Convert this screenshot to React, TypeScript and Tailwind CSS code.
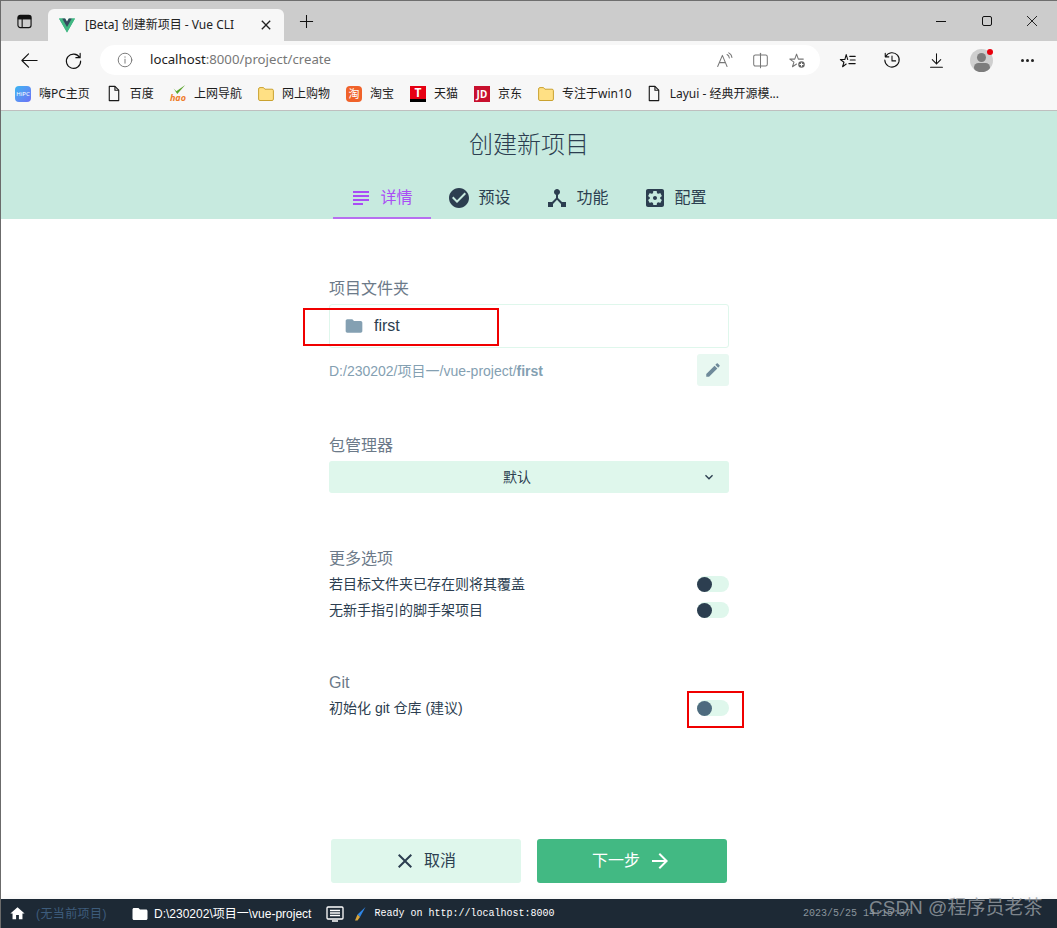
import type { ReactNode } from 'react';

const SANS = "font-['Liberation_Sans','Noto_Sans_CJK_SC',sans-serif]";
const UI = "font-['Noto_Sans','Noto_Sans_CJK_SC',sans-serif]";

function Md({ d, className }: { d: string; className?: string }) {
  return (
    <svg viewBox="0 0 24 24" className={className} fill="currentColor">
      <path d={d} />
    </svg>
  );
}

function Line({ children, className }: { children: ReactNode; className?: string }) {
  return (
    <svg
      viewBox="0 0 20 20"
      className={className}
      fill="none"
      stroke="currentColor"
      strokeWidth="1.2"
      strokeLinecap="round"
      strokeLinejoin="round"
    >
      {children}
    </svg>
  );
}

const paths = {
  subject: 'M14 17H4v2h10v-2zm6-8H4v2h16V9zM4 15h16v-2H4v2zM4 5v2h16V5H4z',
  check:
    'M12 2C6.48 2 2 6.48 2 12s4.48 10 10 10 10-4.48 10-10S17.52 2 12 2zm-2 15l-5-5 1.41-1.41L10 14.17l7.59-7.59L19 8l-9 9z',
  hub: 'M17 16l-4-4V8.82C14.16 8.4 15 7.3 15 6c0-1.66-1.34-3-3-3S9 4.34 9 6c0 1.3.84 2.4 2 2.82V12l-4 4H3v5h5v-3.05l4-4.2 4 4.2V21h5v-5h-4z',
  settings:
    'M12 10c-1.1 0-2 .9-2 2s.9 2 2 2 2-.9 2-2-.9-2-2-2zm7-7H5c-1.11 0-2 .9-2 2v14c0 1.1.89 2 2 2h14c1.11 0 2-.9 2-2V5c0-1.1-.89-2-2-2zm-1.75 9c0 .23-.02.46-.05.68l1.48 1.16c.13.11.17.3.08.45l-1.4 2.42c-.09.15-.27.21-.43.15l-1.74-.7c-.36.28-.76.51-1.18.69l-.26 1.85c-.03.17-.18.3-.35.3h-2.8c-.17 0-.32-.13-.35-.29l-.26-1.85c-.43-.18-.82-.41-1.18-.69l-1.74.7c-.16.06-.34 0-.43-.15l-1.4-2.42c-.09-.15-.05-.34.08-.45l1.48-1.16c-.03-.23-.05-.46-.05-.69 0-.23.02-.46.05-.68l-1.48-1.16c-.13-.11-.17-.3-.08-.45l1.4-2.42c.09-.15.27-.21.43-.15l1.74.7c.36-.28.76-.51 1.18-.69l.26-1.85c.03-.17.18-.3.35-.3h2.8c.17 0 .32.13.35.29l.26 1.85c.43.18.82.41 1.18.69l1.74-.7c.16-.06.34 0 .43.15l1.4 2.42c.09.15.05.34-.08.45l-1.48 1.16c.03.23.05.46.05.69z',
  folder: 'M10 4H4c-1.1 0-1.99.9-1.99 2L2 18c0 1.1.9 2 2 2h16c1.1 0 2-.9 2-2V8c0-1.1-.9-2-2-2h-8l-2-2z',
  edit: 'M3 17.25V21h3.75L17.81 9.94l-3.75-3.75L3 17.25zM20.71 7.04c.39-.39.39-1.02 0-1.41l-2.34-2.34c-.39-.39-1.02-.39-1.41 0l-1.83 1.83 3.75 3.75 1.83-1.83z',
  expand: 'M16.59 8.59L12 13.17 7.41 8.59 6 10l6 6 6-6z',
  close:
    'M19 6.41L17.59 5 12 10.59 6.41 5 5 6.41 10.59 12 5 17.59 6.41 19 12 13.41 17.59 19 19 17.59 13.41 12z',
  arrow: 'M12 4l-1.41 1.41L16.17 11H4v2h12.17l-5.58 5.59L12 20l8-8z',
  home: 'M10 20v-6h4v6h5v-8h3L12 3 2 12h3v8z',
};

function DocIcon() {
  return (
    <svg viewBox="0 0 16 18" className="w-[16px] h-[17px]" fill="none" stroke="#1a1a1a" strokeWidth="1.2">
      <path d="M3 1.5h6l4 4v11H3z" strokeLinejoin="round" />
      <path d="M9 1.5v4h4" />
    </svg>
  );
}

function FolderIcon() {
  return (
    <svg viewBox="0 0 16 14" className="w-[16px] h-[14px]">
      <path d="M.6 2c0-.8.5-1.4 1.3-1.4h3.6l1.4 1.6h7.2c.8 0 1.3.6 1.3 1.4v8.6c0 .8-.5 1.3-1.3 1.3H1.9c-.8 0-1.3-.5-1.3-1.3z" fill="#ffe084" stroke="#c49a20" strokeWidth="0.9" />
    </svg>
  );
}

function Bookmark({ icon, label, className }: { icon: ReactNode; label: string; className?: string }) {
  return (
    <div className={`flex items-center gap-[8px] ${className ?? ''}`}>
      <span className="flex w-[16px] justify-center">{icon}</span>
      <span className="text-[12px] text-[#1c1c1c] whitespace-nowrap">{label}</span>
    </div>
  );
}

function Tab({ icon, label, active }: { icon: string; label: string; active?: boolean }) {
  return (
    <div
      className={`w-[98px] h-[42px] flex items-center justify-center gap-[7px] border-b-2 pt-[2px] pr-[2px] ${
        active ? 'border-[#b76ef0] text-[#a94df5]' : 'border-transparent text-[#2c3e50]'
      }`}
    >
      <Md d={icon} className="w-[24px] h-[24px]" />
      <span className="text-[16px]">{label}</span>
    </div>
  );
}

function SectionLabel({ children }: { children: ReactNode }) {
  return <div className="text-[16px] leading-[20px] text-[#6c7a89]">{children}</div>;
}

function Toggle({ faded }: { faded?: boolean }) {
  return (
    <div className="w-[32px] h-[16px] rounded-full bg-[#dff7ec] flex items-center">
      <div className={`w-[15px] h-[15px] rounded-full ${faded ? 'bg-[#4e6b7f]' : 'bg-[#2c3e50]'}`} />
    </div>
  );
}

function OptionRow({ label, faded }: { label: string; faded?: boolean }) {
  return (
    <div className="flex items-center justify-between h-[26px]">
      <span className="text-[14px] text-[#2c3e50]">{label}</span>
      <Toggle faded={faded} />
    </div>
  );
}

export default function App() {
  return (
    <div className={`relative w-[1057px] h-[928px] overflow-hidden flex flex-col bg-white border-l border-[#6b6b6b] ${UI}`}>
      {/* tab strip */}
      <div className="h-[41px] shrink-0 bg-[#cccccc] border-t border-[#6e6e6e] flex items-end">
        <div className="w-[47px] h-[40px] flex items-center justify-center">
          <svg viewBox="0 0 16 16" className="w-[15px] h-[15px]" fill="none" stroke="#111" strokeWidth="1.2">
            <rect x="1" y="1.5" width="14" height="13" rx="2.5" />
            <path d="M1 5h14M5.5 5v9.5" />
            <path d="M1.5 2.5h13V5h-13z" fill="#111" />
          </svg>
        </div>
        <div className="w-[236px] h-[32px] bg-[#f7f7f7] rounded-t-[6px] flex items-center pl-[11px] pr-[10px]">
          <svg viewBox="0 0 256 221" className="w-[16px] h-[15px] shrink-0">
            <path d="M204.8 0H256L128 220.8 0 0h97.92L128 51.2 157.44 0z" fill="#41b883" />
            <path d="M0 0l128 220.8L256 0h-51.2L128 132.48 50.56 0z" fill="#41b883" />
            <path d="M50.56 0L128 133.12 204.8 0h-47.36L128 51.2 97.92 0z" fill="#35495e" />
          </svg>
          <span className="ml-[10px] text-[12px] text-[#222] whitespace-nowrap">[Beta] 创建新项目 - Vue CLI</span>
          <Md d={paths.close} className="ml-auto w-[16px] h-[16px] text-[#222]" />
        </div>
        <div className="w-[44px] h-[40px] flex items-center justify-center">
          <svg viewBox="0 0 16 16" className="w-[15px] h-[15px]" stroke="#111" strokeWidth="1.1">
            <path d="M8 1v14M1 8h14" />
          </svg>
        </div>
        <div className="ml-auto mr-[2px] h-[40px] flex items-center text-[#111]">
          <div className="w-[46px] flex justify-center">
            <svg viewBox="0 0 10 10" className="w-[10px] h-[10px]" stroke="currentColor"><path d="M0 5.5h10" /></svg>
          </div>
          <div className="w-[45px] flex justify-center">
            <svg viewBox="0 0 10 10" className="w-[10px] h-[10px]" fill="none" stroke="currentColor"><rect x="0.5" y="0.5" width="9" height="9" rx="1.5" /></svg>
          </div>
          <div className="w-[46px] flex justify-center">
            <svg viewBox="0 0 10 10" className="w-[10px] h-[10px]" stroke="currentColor" strokeWidth="0.9"><path d="M0 0l10 10M10 0L0 10" /></svg>
          </div>
        </div>
      </div>

      {/* toolbar */}
      <div className="h-[36px] shrink-0 bg-[#f7f7f7] flex items-center pt-[2px]">
        <div className="w-[55px] flex justify-center pl-[2px]">
          <Line className="w-[19px] h-[19px] text-[#111]">
            <path d="M18 10H2M9 3l-7 7 7 7" />
          </Line>
        </div>
        <div className="w-[35px] flex justify-center">
          <Line className="w-[19px] h-[19px] text-[#111]">
            <path d="M16.5 7A7.5 7.5 0 1 0 17.5 10.5M17 2.5V7h-4.5" />
          </Line>
        </div>
        <div className="ml-[9px] w-[720px] h-[30px] rounded-full bg-white flex items-center pl-[17px] pr-[14px]">
          <Line className="w-[16px] h-[16px] text-[#777]">
            <circle cx="10" cy="10" r="8.5" />
            <path d="M10 9v5M10 6v.6" />
          </Line>
          <span className="ml-[17px] text-[13.2px] text-[#1c1c1c]">
            localhost<span className="text-[#777]">:8000/project/create</span>
          </span>
          <div className="ml-auto flex items-center gap-[19px] text-[#777]">
            <Line className="w-[17px] h-[17px]">
              <path d="M2 17L7.5 4 13 17M4 12.5h7M13 3c1.5.8 2.5 2.2 2.7 4M15 1c2 1 3.5 3 3.7 5.5" />
            </Line>
            <Line className="w-[17px] h-[17px]">
              <rect x="2" y="3.5" width="16" height="13" rx="2" />
              <path d="M10 1.5v17" />
            </Line>
            <Line className="w-[18px] h-[18px]">
              <path d="M9.5 14.5L5 17.5l1.6-5.2L2 9h5.5L9.5 3.5 11.5 9H17" />
              <circle cx="15" cy="15" r="3.6" fill="#666" stroke="none" />
              <path d="M15 13.3v3.4M13.3 15h3.4" stroke="#fff" />
            </Line>
          </div>
        </div>
        <div className="ml-[15px] flex items-center text-[#111]">
          <div className="w-[26px] flex justify-center">
            <Line className="w-[18px] h-[18px]">
              <path d="M8 14.5L4 17.5l1.5-5L1.5 9.5h5L8 4l1.7 5.5M12 6h6M12.5 10h5.5M11 14h7" />
            </Line>
          </div>
          <div className="ml-[18px] w-[26px] flex justify-center">
            <Line className="w-[18px] h-[18px]">
              <path d="M3 6a8 8 0 1 1-1 4M2.5 2.5V6.5H6.5M10 5.5V11h4" />
            </Line>
          </div>
          <div className="ml-[18px] w-[26px] flex justify-center">
            <Line className="w-[17px] h-[17px]">
              <path d="M10 2v12M5 9l5 5 5-5M3 18h14" />
            </Line>
          </div>
          <div className="ml-[21px] relative w-[23px] h-[23px]">
            <div className="w-[23px] h-[23px] rounded-full bg-[#cfcfcf] overflow-hidden">
              <div className="mx-auto mt-[4px] w-[9px] h-[9px] rounded-full bg-[#7d7d7d]" />
              <div className="mx-auto mt-[1px] w-[16px] h-[9px] rounded-full bg-[#7d7d7d]" />
            </div>
            <span className="absolute right-[0px] top-[0px] w-[6px] h-[6px] rounded-full bg-[#e8000d]" />
          </div>
          <div className="ml-[28px] flex gap-[2px]">
            <span className="w-[3px] h-[3px] rounded-full bg-[#222]" />
            <span className="w-[3px] h-[3px] rounded-full bg-[#222]" />
            <span className="w-[3px] h-[3px] rounded-full bg-[#222]" />
          </div>
        </div>
      </div>

      {/* bookmarks */}
      <div className="h-[34px] shrink-0 bg-[#f7f7f7] border-b border-[#bfbfbf] flex items-center pl-[14px] gap-[16px]">
        <Bookmark
          label="嗨PC主页"
          icon={<span className="w-[16px] h-[16px] rounded-[4px] bg-gradient-to-br from-[#35b6f2] to-[#6a6ff5] text-white text-[6px] leading-[16px] text-center">HiPC</span>}
        />
        <Bookmark label="百度" icon={<DocIcon />} />
        <Bookmark
          label="上网导航"
          icon={
            <span className="relative w-[18px] h-[17px] block">
              <svg viewBox="0 0 18 10" className="absolute left-[1px] top-0 w-[16px] h-[9px]">
                <path d="M3 4l3 3 10-7-9 10z" fill="#5aa52c" />
              </svg>
              <span className="absolute left-0 bottom-0 text-[9px] leading-[9px] italic font-bold text-[#ef7d2a]">hao</span>
            </span>
          }
        />
        <Bookmark label="网上购物" icon={<FolderIcon />} />
        <Bookmark
          label="淘宝"
          icon={
            <span className="w-[16px] h-[16px] rounded-[4px] bg-[#f0622a] text-white text-[11px] leading-[16px] text-center">淘</span>
          }
        />
        <Bookmark
          label="天猫"
          icon={
            <span className="w-[16px] h-[16px] bg-[#e60012] border-b-[3px] border-black text-white text-[12px] leading-[13px] font-bold text-center">T</span>
          }
        />
        <Bookmark
          label="京东"
          icon={<span className="w-[16px] h-[16px] bg-[#c8102e] text-white text-[10px] leading-[16px] font-bold text-center">JD</span>}
        />
        <Bookmark label="专注于win10" icon={<FolderIcon />} className="-mr-[2px]" />
        <Bookmark label="Layui - 经典开源模..." icon={<DocIcon />} />
      </div>

      {/* page header */}
      <div className={`shrink-0 bg-[#c7eadf] h-[108px] flex flex-col items-center ${SANS}`}>
        <h1 className="mt-[18px] h-[48px] text-[24px] leading-[32px] font-light text-[#2c3e50]">创建新项目</h1>
        <div className="flex">
          <Tab icon={paths.subject} label="详情" active />
          <Tab icon={paths.check} label="预设" />
          <Tab icon={paths.hub} label="功能" />
          <Tab icon={paths.settings} label="配置" />
        </div>
      </div>

      {/* form */}
      <div className={`flex-1 flex flex-col items-center ${SANS}`}>
        <div className="w-[400px] pt-[60px]">
          <SectionLabel>项目文件夹</SectionLabel>
          <div className="mt-[5px] h-[44px] border border-[#dff7ec] rounded-[3px] flex items-center pl-[14px]">
            <Md d={paths.folder} className="w-[20px] h-[20px] text-[#84a0b2]" />
            <span className="ml-[10px] text-[16px] text-[#2c3e50]">first</span>
          </div>
          <div className="mt-[6px] flex items-center justify-between h-[32px]">
            <span className="mt-[2px] text-[14px] text-[#84a0b2]">
              D:/230202/项目一/vue-project/<b>first</b>
            </span>
            <div className="w-[32px] h-[32px] rounded-[3px] bg-[#e8f8f1] flex items-center justify-center">
              <Md d={paths.edit} className="w-[18px] h-[18px] text-[#6f8a9a]" />
            </div>
          </div>

          <div className="mt-[50px]">
            <SectionLabel>包管理器</SectionLabel>
          </div>
          <div className="mt-[5px] h-[32px] rounded-[3px] bg-[#dff7ec] flex items-center relative justify-center">
            <span className="text-[14px] text-[#2c3e50] -ml-[24px]">默认</span>
            <Md d={paths.expand} className="absolute right-[12px] w-[16px] h-[16px] text-[#2c3e50]" />
          </div>

          <div className="mt-[56px]">
            <SectionLabel>更多选项</SectionLabel>
          </div>
          <div className="mt-[2px]">
            <OptionRow label="若目标文件夹已存在则将其覆盖" />
            <OptionRow label="无新手指引的脚手架项目" />
          </div>

          <div className="mt-[50px]">
            <SectionLabel>Git</SectionLabel>
          </div>
          <div className="mt-[2px]">
            <OptionRow label="初始化 git 仓库 (建议)" faded />
          </div>
        </div>

        <div className="mt-auto mb-[16px] flex gap-[16px]">
          <button className="w-[190px] h-[44px] rounded-[3px] bg-[#dff7ec] text-[#2c3e50] flex items-center justify-center gap-[7px] pr-[3px]">
            <Md d={paths.close} className="w-[24px] h-[24px]" />
            <span className="text-[16px]">取消</span>
          </button>
          <button className="w-[190px] h-[44px] rounded-[3px] bg-[#42b983] text-white flex items-center justify-center gap-[8px]">
            <span className="text-[16px]">下一步</span>
            <Md d={paths.arrow} className="w-[24px] h-[24px]" />
          </button>
        </div>
      </div>

      {/* status bar */}
      <div className={`h-[29px] shrink-0 bg-[#1d2935] flex items-center text-white shadow-[0_-3px_6px_rgba(0,0,0,0.03)] ${SANS}`}>
        <Md d={paths.home} className="ml-[8px] w-[17px] h-[17px]" />
        <span className="ml-[10px] w-[72px] text-[12px] tracking-[0.4px] text-[#3d5c7c] whitespace-nowrap">(无当前项目)</span>
        <Md d={paths.folder} className="ml-[23px] w-[18px] h-[18px]" />
        <span className="ml-[5px] text-[12px]">D:\230202\项目一\vue-project</span>
        <svg viewBox="0 0 18 16" className="ml-[15px] w-[18px] h-[16px]" fill="none" stroke="#fff" strokeWidth="1.3">
          <rect x="1" y="1" width="16" height="12" rx="1" />
          <path d="M4 4.5h10M4 7h10M4 9.5h10M6 15h6" />
        </svg>
        <svg viewBox="0 0 12 14" className="ml-[10px] w-[12px] h-[14px]">
          <path d="M11.5 0L3.5 7.5l2.5 2.5z" fill="#2f86e6" />
          <path d="M3.5 7.5l2.5 2.5-2.5 3.5H1z" fill="#d9a43a" />
        </svg>
        <span className="ml-[8px] font-['Liberation_Mono',monospace] text-[10px]">Ready on http://localhost:8000</span>
        <span className="ml-auto mr-[146px] font-['Liberation_Mono',monospace] text-[10px] text-[#8a949c]">2023/5/25 14:15:37</span>
      </div>

      {/* red annotation boxes */}
      <div className="absolute left-[302px] top-[308px] w-[196px] h-[38px] border-2 border-[#f00000]" />
      <div className="absolute left-[686px] top-[691px] w-[57px] h-[37px] border-2 border-[#f00000]" />

      {/* CSDN watermark */}
      <div className={`absolute left-[868px] top-[895px] text-[19px] leading-[26px] text-[#9aa0a6]/80 whitespace-nowrap ${SANS}`}>
        CSDN @程序员老茶
      </div>
    </div>
  );
}
